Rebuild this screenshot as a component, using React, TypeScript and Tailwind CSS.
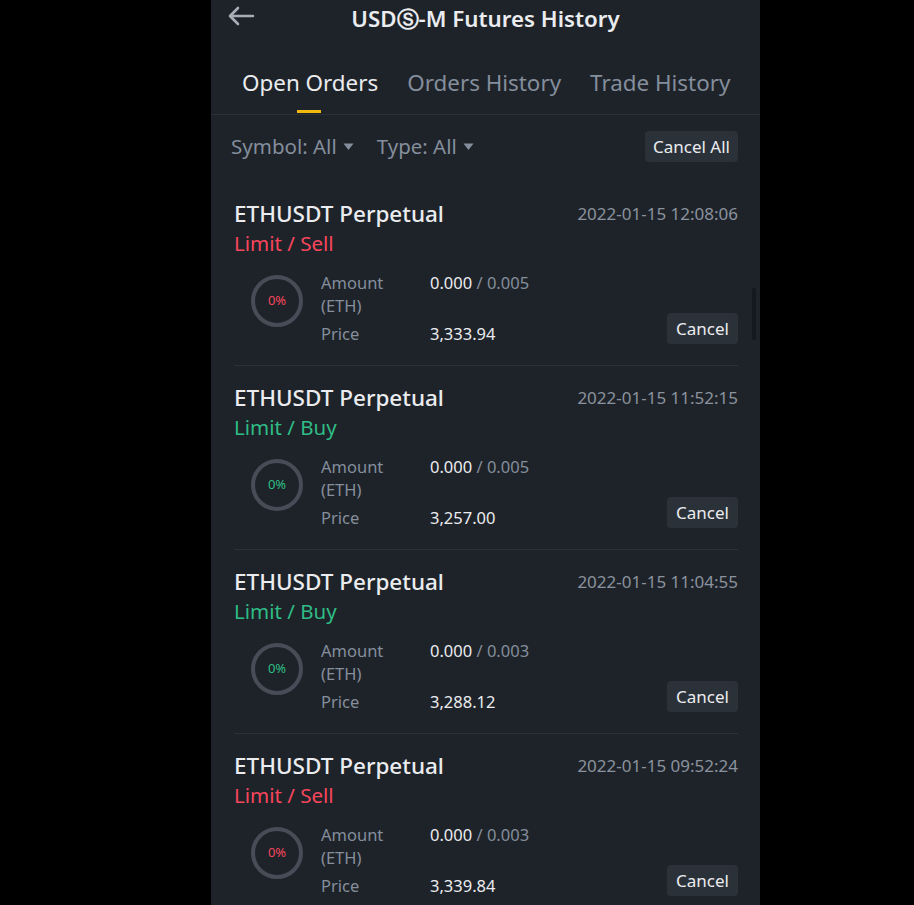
import React from 'react';

type Order = {
  time: string;
  side: 'Sell' | 'Buy';
  total: string;
  price: string;
};

const orders: Order[] = [
  { time: '2022-01-15 12:08:06', side: 'Sell', total: '0.005', price: '3,333.94' },
  { time: '2022-01-15 11:52:15', side: 'Buy', total: '0.005', price: '3,257.00' },
  { time: '2022-01-15 11:04:55', side: 'Buy', total: '0.003', price: '3,288.12' },
  { time: '2022-01-15 09:52:24', side: 'Sell', total: '0.003', price: '3,339.84' },
];

const Caret = () => (
  <svg width="11" height="8" viewBox="0 0 11 8" className="ml-[6px] mt-[1px]">
    <path d="M0.5 0.5h10L5.5 7z" fill="#848e9c" />
  </svg>
);

const OrderCard = ({ order, last }: { order: Order; last: boolean }) => {
  const sell = order.side === 'Sell';
  return (
    <div className={`pt-[18px] pb-[20px] ${last ? '' : 'border-b border-[#2b3139]'}`}>
      <div className="flex items-start justify-between">
        <div className="text-[22.5px] leading-[28px] text-[#eaecef] font-medium">ETHUSDT Perpetual</div>
        <div className="text-[17px] leading-[28px] text-[#8a929e]">{order.time}</div>
      </div>
      <div className={`mt-[2px] text-[20.5px] leading-[26px] ${sell ? 'text-[#f6465d]' : 'text-[#2ebd85]'}`}>
        Limit / {order.side}
      </div>
      <div className="mt-[15px] flex items-end">
        <div className="ml-[17px] mt-[4px] self-start w-[52px] h-[52px] rounded-full border-[4px] border-[#474d57] flex items-center justify-center">
          <span className={`text-[13px] ${sell ? 'text-[#f6465d]' : 'text-[#2ebd85]'}`}>0%</span>
        </div>
        <div className="ml-[18px] flex-1 text-[16.5px] leading-[23px]">
          <div className="flex">
            <div className="w-[109px] text-[#848e9c]">
              Amount
              <br />
              (ETH)
            </div>
            <div>
              <span className="text-[#eaecef]">0.000</span>
              <span className="text-[#848e9c]"> / {order.total}</span>
            </div>
          </div>
          <div className="flex mt-[5px]">
            <div className="w-[109px] text-[#848e9c]">Price</div>
            <div className="text-[#eaecef]">{order.price}</div>
          </div>
        </div>
        <button className="h-[31px] px-[9px] rounded-[4px] bg-[#2b3139] text-[17px] text-[#eaecef] mb-[1px]">
          Cancel
        </button>
      </div>
    </div>
  );
};

export default function App() {
  return (
    <div
      className="w-full h-[905px] bg-black flex overflow-hidden pl-[211px]"
      style={{ fontFamily: '"Noto Sans", sans-serif' }}
    >
      <div className="relative w-[549px] h-full bg-[#1e2329]">
        {/* header */}
        <div className="relative h-[38px] flex items-center justify-center">
          <svg width="28" height="20" viewBox="0 0 28 20" className="absolute left-[16px] top-[6px]">
            <path d="M26 10H3M11 2L3 10l8 8" stroke="#a7aeb8" strokeWidth="2.6" fill="none" strokeLinecap="round" strokeLinejoin="round" />
          </svg>
          <div className="text-[22.3px] font-semibold text-[#eaecef]">USDⓈ-M Futures History</div>
        </div>

        {/* tabs */}
        <div className="h-[77px] border-b border-[#2b3139] flex items-end pl-[31px] gap-[29px]">
          <div className="relative pb-[14px] text-[22.4px] text-[#eaecef]">
            Open Orders
            <div className="absolute left-[55px] bottom-[1px] w-[24px] h-[3px] bg-[#f0b90b]" />
          </div>
          <div className="pb-[14px] text-[22.4px] text-[#848e9c]">Orders History</div>
          <div className="pb-[14px] text-[22.4px] text-[#848e9c]">Trade History</div>
        </div>

        {/* filters */}
        <div className="flex items-center justify-between pl-[20px] pr-[22px] pt-[16px] pb-[20px]">
          <div className="flex items-center text-[20.5px] text-[#848e9c]">
            <span className="flex items-center">
              Symbol: All
              <Caret />
            </span>
            <span className="flex items-center ml-[23px]">
              Type: All
              <Caret />
            </span>
          </div>
          <button className="h-[31px] px-[8px] rounded-[4px] bg-[#2b3139] text-[17px] text-[#eaecef]">Cancel All</button>
        </div>

        {/* orders */}
        <div className="pl-[23px] pr-[22px]">
          {orders.map((o, i) => (
            <OrderCard key={i} order={o} last={i === orders.length - 1} />
          ))}
        </div>

        <div className="absolute left-[541px] top-[288px] w-[4px] h-[52px] rounded-full bg-[#15191e]" />
      </div>
    </div>
  );
}
